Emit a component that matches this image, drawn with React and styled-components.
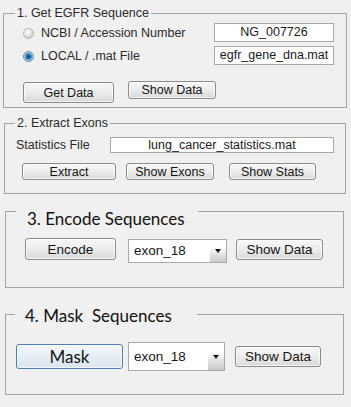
import React from 'react';
import styled, { createGlobalStyle } from 'styled-components';

const GlobalStyle = createGlobalStyle`
    html, body {
        margin: 0;
        padding: 0;
        background: #f0f0f0;
    }
    body {
        width: 351px;
        height: 407px;
        overflow: hidden;
        font-family: "Liberation Sans", Arial, sans-serif;
    }
`;

const Page = styled.div`
    display: flex;
    flex-direction: column;
    align-items: flex-start;
    width: 351px;
    height: 407px;
    box-sizing: border-box;
`;

const Panel = styled.fieldset`
    box-sizing: border-box;
    min-width: 0;
    width: ${p => p.$w}px;
    margin: ${p => p.$mt}px 0 0 ${p => p.$ml}px;
    padding: 0 0 ${p => p.$pb}px 0;
    border: 1px solid #a3a3a3;
`;

const Legend = styled.legend`
    box-sizing: border-box;
    margin-left: ${p => p.$ml}px;
    padding: 0 2px;
    font-size: 12.5px;
    line-height: 14px;
    color: #2b2b2b;
    white-space: pre;
`;

const BigLegend = styled.legend`
    box-sizing: border-box;
    width: 182px;
    margin-left: ${p => p.$ml}px;
    padding: ${p => p.$pt}px 0 0 ${p => p.$pl}px;
    font-family: Lato, "Open Sans", sans-serif;
    font-size: 17px;
    line-height: 18px;
    color: #111;
    white-space: pre;
`;

const Row = styled.div`
    display: flex;
    align-items: ${p => p.$align || 'flex-start'};
    margin-top: ${p => p.$mt}px;
    height: ${p => (p.$h ? `${p.$h}px` : 'auto')};
`;

const Radio = styled.span`
    box-sizing: border-box;
    width: 11px;
    height: 11px;
    margin: 5px 0 0 19px;
    border-radius: 50%;
    border: 1px solid ${p => (p.$checked ? '#5b7f99' : '#b8b8b8')};
    background: ${p => (p.$checked
        ? 'radial-gradient(circle, #0d3f66 0, #1f77b4 2px, #63a9d6 3.5px, #e4eef4 4.5px)'
        : 'radial-gradient(circle at 40% 35%, #ffffff 0, #ececec 3px, #cfcfcf 5px)')};
`;

const Label = styled.span`
    margin: ${p => p.$mt || 0}px 0 0 ${p => p.$ml}px;
    font-size: 12.5px;
    color: #2b2b2b;
    white-space: nowrap;
`;

const TextField = styled.div`
    box-sizing: border-box;
    width: ${p => p.$w}px;
    height: ${p => p.$h}px;
    margin-left: auto;
    margin-right: ${p => p.$mr}px;
    border: 1px solid #a8a8a8;
    background: #fff;
    font-size: 12.5px;
    line-height: ${p => p.$h - 2}px;
    color: #1a1a1a;
    text-align: center;
    white-space: nowrap;
    overflow: hidden;
`;

const Button = styled.div`
    box-sizing: border-box;
    display: flex;
    align-items: center;
    justify-content: center;
    width: ${p => p.$w}px;
    height: ${p => p.$h}px;
    margin: ${p => p.$mt || 0}px 0 0 ${p => p.$ml}px;
    border: 1px solid ${p => (p.$focus ? '#4f7fae' : '#8c8c8c')};
    border-radius: 3px;
    background: ${p => (p.$focus
        ? 'linear-gradient(#f4f8fb, #e6eef5 50%, #dbe5ee)'
        : 'linear-gradient(#f7f7f7, #ececec 50%, #d9d9d9)')};
    box-shadow: inset 0 0 0 1px rgba(255, 255, 255, 0.7);
    font-family: ${p => (p.$lato ? 'Lato, "Open Sans", sans-serif' : '"Liberation Sans", Arial, sans-serif')};
    font-size: ${p => p.$fs || 12.5}px;
    color: #151515;
    white-space: nowrap;
`;

const Select = styled.div`
    box-sizing: border-box;
    display: flex;
    width: ${p => p.$w}px;
    height: ${p => p.$h}px;
    margin: ${p => p.$mt || 0}px 0 0 ${p => p.$ml}px;
    border: 1px solid #a9a9a9;
    background: #fff;
`;

const SelectText = styled.span`
    flex: 1;
    padding-left: 5px;
    font-size: 13.5px;
    line-height: ${p => p.$h}px;
    color: #151515;
`;

const SelectArrow = styled.span`
    display: flex;
    align-items: center;
    justify-content: center;
    width: 16px;
    background: linear-gradient(#ffffff 35%, #e2e2e2 65%, #c9c9c9);

    &::after {
        content: '';
        border-left: 3.5px solid transparent;
        border-right: 3.5px solid transparent;
        border-top: 4px solid #111;
    }
`;

const Dropdown = ({ w, h, mt, ml, value }) => (
    <Select $w={w} $h={h} $mt={mt} $ml={ml}>
        <SelectText $h={h - 2}>{value}</SelectText>
        <SelectArrow />
    </Select>
);

export default function App() {
    return (
        <Page>
            <GlobalStyle />

            <Panel $w={344} $mt={6} $ml={3} $pb={4}>
                <Legend $ml={11}>1. Get EGFR Sequence</Legend>
                <Row $mt={3} $h={19} $align="flex-start">
                    <Radio />
                    <Label $ml={7} $mt={3}>NCBI / Accession Number</Label>
                    <TextField $w={120} $h={19} $mr={12}>NG_007726</TextField>
                </Row>
                <Row $mt={4} $h={19} $align="flex-start">
                    <Radio $checked />
                    <Label $ml={7} $mt={3}>LOCAL / .mat File</Label>
                    <TextField $w={120} $h={19} $mr={12}>egfr_gene_dna.mat</TextField>
                </Row>
                <Row $mt={16}>
                    <Button $w={91} $h={21} $mt={1} $ml={19}>Get Data</Button>
                    <Button $w={88} $h={18} $ml={14}>Show Data</Button>
                </Row>
            </Panel>

            <Panel $w={342} $mt={8} $ml={4} $pb={13}>
                <Legend $ml={10}>2. Extract Exons</Legend>
                <Row $mt={7} $align="center">
                    <Label $ml={11}>Statistics File</Label>
                    <TextField $w={224} $h={16} $mr={11}>lung_cancer_statistics.mat</TextField>
                </Row>
                <Row $mt={10}>
                    <Button $w={94} $h={17} $ml={17}>Extract</Button>
                    <Button $w={88} $h={17} $ml={10}>Show Exons</Button>
                    <Button $w={87} $h={17} $ml={15}>Show Stats</Button>
                </Row>
            </Panel>

            <Panel $w={339} $mt={0} $ml={5} $pb={24}>
                <BigLegend $ml={10} $pl={11} $pt={16}>3. Encode Sequences</BigLegend>
                <Row $mt={10}>
                    <Button $w={91} $h={22} $ml={19} $fs={13.5}>Encode</Button>
                    <Dropdown w={99} h={24} mt={1} ml={12} value="exon_18" />
                    <Button $w={87} $h={21} $mt={1} $ml={9} $fs={13.5}>Show Data</Button>
                </Row>
            </Panel>

            <Panel $w={339} $mt={15} $ml={5} $pb={23}>
                <BigLegend $ml={9} $pl={10} $pt={4}>{'4. Mask  Sequences'}</BigLegend>
                <Row $mt={17}>
                    <Button $w={107} $h={25} $mt={2} $ml={10} $fs={17} $lato $focus>Mask</Button>
                    <Dropdown w={97} h={29} ml={5} value="exon_18" />
                    <Button $w={86} $h={21} $mt={4} $ml={10} $fs={13.5}>Show Data</Button>
                </Row>
            </Panel>
        </Page>
    );
}
